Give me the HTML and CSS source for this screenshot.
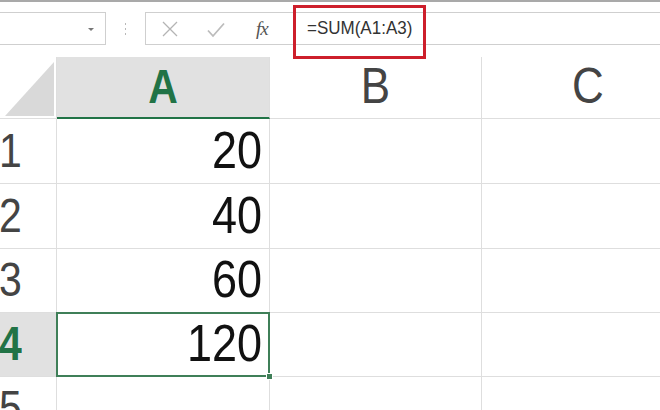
FILE: index.html
```html
<!DOCTYPE html>
<html>
<head>
<meta charset="utf-8">
<link rel="stylesheet" href="styles.css">
</head>
<body>
<div class="app">
  <div class="toolbar">
    <div class="namebox"><span class="arrow"></span></div>
    <div class="sep"><i></i><i></i><i></i></div>
    <div class="fbar">
      <div class="fbtns">
        <svg class="ico-x" width="16" height="16" viewBox="0 0 16 16"><path d="M1 1 L15 15 M15 1 L1 15" stroke="#b4b4b4" stroke-width="1.3" fill="none"/></svg>
        <svg class="ico-ok" width="18" height="16" viewBox="0 0 18 16"><path d="M1 8.5 L6 14 L17 1.5" stroke="#bcbcbc" stroke-width="1.8" fill="none"/></svg>
        <span class="fx">fx</span>
      </div>
      <div class="finput"><span class="formula">=SUM(A1:A3)</span></div>
    </div>
    <div class="highlight"></div>
  </div>
  <div class="grid">
    <div class="corner"><span class="tri"></span></div>
    <div class="colh sel"><span class="t">A</span></div>
    <div class="colh"><span class="t">B</span></div>
    <div class="colh"><span class="t">C</span></div>

    <div class="rowh"><span class="t">1</span></div>
    <div class="cell"><span class="t">20</span></div>
    <div class="cell"></div>
    <div class="cell"></div>

    <div class="rowh"><span class="t">2</span></div>
    <div class="cell"><span class="t">40</span></div>
    <div class="cell"></div>
    <div class="cell"></div>

    <div class="rowh"><span class="t">3</span></div>
    <div class="cell"><span class="t">60</span></div>
    <div class="cell"></div>
    <div class="cell"></div>

    <div class="rowh sel"><span class="t">4</span></div>
    <div class="cell active"><span class="t">120</span><span class="handle"></span></div>
    <div class="cell"></div>
    <div class="cell"></div>

    <div class="rowh"><span class="t">5</span></div>
    <div class="cell"></div>
    <div class="cell"></div>
    <div class="cell"></div>
  </div>
</div>
</body>
</html>
```
FILE: styles.css
```css
html, body {
  margin: 0;
  padding: 0;
  background: #ffffff;
}
.app {
  width: 660px;
  height: 410px;
  overflow: hidden;
  font-family: "Liberation Sans", Arial, sans-serif;
}
.toolbar {
  position: relative;
  border-top: 2px solid #a9a9a9;
  display: flex;
  align-items: flex-start;
  padding-top: 10px;
  box-sizing: border-box;
  height: 57px;
}
.namebox {
  width: 107px;
  height: 33px;
  margin-left: -1px;
  border: 1px solid #cfcfcf;
  box-sizing: border-box;
  display: flex;
  align-items: center;
  justify-content: flex-end;
  padding-right: 11px;
}
.arrow {
  width: 0;
  height: 0;
  border-left: 3px solid transparent;
  border-right: 3px solid transparent;
  border-top: 3px solid #777;
  margin-top: 1px;
}
.sep {
  width: 39px;
  height: 33px;
  display: flex;
  flex-direction: column;
  align-items: center;
  justify-content: center;
  gap: 3px;
}
.sep i {
  display: block;
  width: 1px;
  height: 2px;
  background: #b8b8b8;
}
.fbar {
  flex: 1;
  height: 33px;
  display: flex;
  border-top: 1px solid #cfcfcf;
  border-bottom: 1px solid #cfcfcf;
  border-left: 1px solid #cfcfcf;
  box-sizing: border-box;
}
.fbtns {
  width: 146px;
  display: flex;
  align-items: center;
  padding-left: 16px;
  box-sizing: border-box;
}
.ico-x { margin-top: 1px; }
.ico-ok { margin-left: 29px; margin-top: 2px; }
.fx {
  margin-left: 31px;
  font-family: "Liberation Serif", "Times New Roman", serif;
  font-style: italic;
  font-size: 19px;
  color: #555;
  letter-spacing: -1px;
}
.finput {
  flex: 1;
  display: flex;
  align-items: center;
  padding-left: 15px;
}
.formula {
  font-size: 17px;
  color: #333;
  display: inline-block;
  transform: scaleY(1.05);
  margin-top: 1px;
}
.highlight {
  position: absolute;
  left: 293px;
  top: 3px;
  width: 133px;
  height: 54px;
  border: 3px solid #cd1f2b;
  box-sizing: border-box;
}
.grid {
  display: grid;
  grid-template-columns: 57px 213px 212px 213px;
  grid-template-rows: 62px 65px 65px 64px 64px 64px;
}
.grid > div {
  box-sizing: border-box;
  border-right: 1px solid #dedede;
  border-bottom: 1px solid #dedede;
  display: flex;
  position: relative;
}
.t {
  display: inline-block;
  transform: scaleY(1.15);
  transform-origin: 50% 100%;
  line-height: 1;
}
.corner {
  align-items: flex-end;
  justify-content: flex-end;
  padding: 0 2px 2px 0;
}
.tri {
  display: block;
  width: 49px;
  height: 54px;
  background: #d9d9d9;
  clip-path: polygon(100% 0, 100% 100%, 0 100%);
}
.colh {
  align-items: flex-end;
  justify-content: center;
  padding-bottom: 7px;
  font-size: 44px;
  color: #444;
}
.colh.sel {
  background: #e1e1e1;
  border-bottom: 2px solid #217346;
  color: #217346;
  font-weight: bold;
  font-size: 41px;
  padding-bottom: 6px;
}
.rowh {
  align-items: center;
  justify-content: flex-start;
  font-size: 41px;
  color: #444;
  padding-left: 0;
}
.rowh .t {
  transform-origin: 50% 50%;
  margin-left: -1px;
}
.rowh.sel {
  background: #e1e1e1;
  color: #217346;
  font-weight: bold;
}
.cell {
  align-items: flex-end;
  justify-content: flex-end;
  padding: 0 7px 7px 0;
  font-size: 45px;
  color: #111;
}
.cell.active::after {
  content: "";
  position: absolute;
  left: -1px;
  top: -1px;
  right: -1px;
  bottom: -1px;
  border: 2px solid #3f7f58;
}
.handle {
  position: absolute;
  right: -4px;
  bottom: -4px;
  width: 5px;
  height: 5px;
  background: #3f7f58;
  border: 1px solid #fff;
  z-index: 2;
}
```
